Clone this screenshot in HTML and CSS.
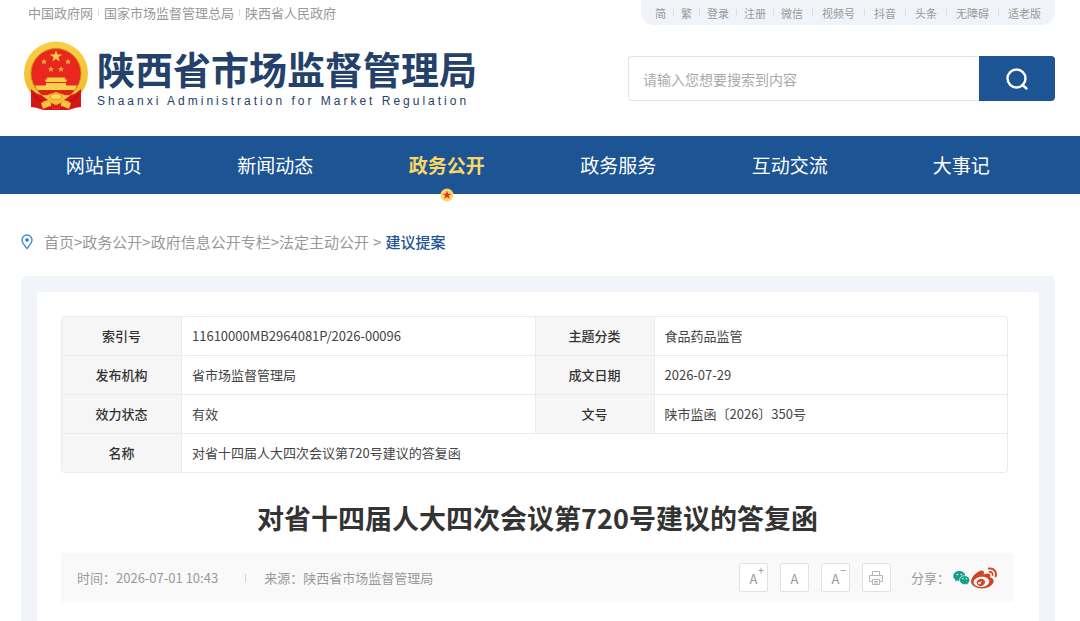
FILE: index.html
```html
<!DOCTYPE html>
<html lang="zh-CN">
<head>
<meta charset="utf-8">
<meta name="viewport" content="width=device-width, initial-scale=1">
<title>对省十四届人大四次会议第720号建议的答复函</title>
<link rel="stylesheet" href="styles.css">
</head>
<body>
<header class="header">
  <div class="topbar">
    <ul class="gov-links">
      <li><a href="#">中国政府网</a></li>
      <li><a href="#">国家市场监督管理总局</a></li>
      <li><a href="#">陕西省人民政府</a></li>
    </ul>
    <div class="tools">
      <ul class="tool-list">
        <li><a href="#">简</a></li>
        <li><a href="#">繁</a></li>
        <li><a href="#">登录</a></li>
        <li><a href="#">注册</a></li>
        <li><a href="#">微信</a></li>
      </ul>
      <ul class="tool-list tool-list-wide">
        <li><a href="#">视频号</a></li>
        <li><a href="#">抖音</a></li>
        <li><a href="#">头条</a></li>
        <li><a href="#">无障碍</a></li>
        <li><a href="#">适老版</a></li>
      </ul>
    </div>
  </div>
  <div class="masthead">
    <a class="brand" href="#">
      <svg class="emblem" viewBox="0 0 66 70" aria-hidden="true">
        <defs>
          <linearGradient id="gold" x1="0" y1="0" x2="0" y2="1">
            <stop offset="0" stop-color="#f8cf45"/>
            <stop offset="1" stop-color="#f0b92e"/>
          </linearGradient>
        </defs>
        <path d="M9 46L8 66q6 0 12 3h26q6-3 12-3l-1-20z" fill="#d3161c"/>
        <circle cx="33" cy="32.500" r="32" fill="url(#gold)"/>
        <circle cx="33" cy="32.500" r="25" fill="#e8281f" stroke="#c88a1c" stroke-width="1"/>
        <path d="M33 9l1.500 4.400h4.600l-3.700 2.800 1.400 4.400-3.800-2.700-3.800 2.700 1.400-4.400-3.700-2.800h4.600z" fill="#f7cb45"/>
        <g fill="#f0b83a">
          <path d="M21 17.500l.8 2.200h2.300l-1.800 1.400.7 2.300-2-1.400-2 1.400.7-2.300-1.800-1.400h2.300z"/>
          <path d="M45 17.500l.8 2.200h2.300l-1.800 1.400.7 2.300-2-1.400-2 1.400.7-2.300-1.800-1.400h2.300z"/>
          <path d="M28 25l.8 2.200h2.300l-1.800 1.400.7 2.300-2-1.400-2 1.400.7-2.300-1.800-1.400h2.300z"/>
          <path d="M38 25l.8 2.200h2.300l-1.800 1.400.7 2.300-2-1.400-2 1.400.7-2.300-1.800-1.400h2.300z"/>
        </g>
        <path d="M24 36.500h18v2h2l-1 2.500H23l-1-2.500h2zM23 42h20v2.500H23zM12 44.500h42l-2.500 4.500H14.500z" fill="#fad04a"/>
        <path d="M15 49.500h36q-4 6-9 8l-9-5-9 5q-5-2-9-8z" fill="#df221e"/>
        <path d="M17 54q7 1 10-1l6-2 6 2q3 2 10 1-2 5-10 5l-6 2-6-2q-8 0-10-5z" fill="#f5c238"/>
        <path d="M27 55q6-5 12 0l-2 4q-4-2-8 0z" fill="#fbd75c" stroke="#cf8b1a" stroke-width=".7"/>
        <path d="M8 48q5 5 10 6l7 5-6 2-1 7-10-3zM58 48q-5 5-10 6l-7 5 6 2 1 7 10-3z" fill="#d6181b"/>
        <path d="M10 52q3 7 9 8M56 52q-3 7-9 8" fill="none" stroke="#a80f14"/>
        <path d="M18 62l7-2 4 4 4-3 4 3 4-4 7 2-2 6-7-3-6 3-6-3-7 3z" fill="#f6c33b"/>
        <path d="M28 62l5 2 5-2v4l-5 2-5-2z" fill="#dc201d"/>
      </svg>
      <span class="brand-text">
        <span class="brand-name">陕西省市场监督管理局</span>
        <span class="brand-en">Shaanxi Administration for Market Regulation</span>
      </span>
    </a>
    <form class="search">
      <input class="search-input" type="text" aria-label="搜索" placeholder="请输入您想要搜索到内容">
      <button class="search-button" type="submit" aria-label="搜索">
        <svg width="24" height="24" viewBox="0 0 24 24" fill="none" stroke="#fff" stroke-width="2.400" stroke-linecap="round"><circle cx="11.500" cy="11.500" r="9"/><path d="M17.500 18l4 3.500"/></svg>
      </button>
    </form>
  </div>
</header>

<nav class="nav">
  <a class="nav-item" href="#">网站首页</a>
  <a class="nav-item" href="#">新闻动态</a>
  <a class="nav-item nav-item-active" href="#" aria-current="page">政务公开
    <svg class="nav-badge" viewBox="0 0 14 14" aria-hidden="true"><circle cx="7" cy="7" r="6.500" fill="#fbd666"/><path d="M7 2.500l1.100 3.200h3.300L8.800 7.700l1 3.300L7 9l-2.800 2 1-3.300-2.600-2h3.300z" fill="#ee2f24"/></svg>
  </a>
  <a class="nav-item" href="#">政务服务</a>
  <a class="nav-item" href="#">互动交流</a>
  <a class="nav-item" href="#">大事记</a>
</nav>

<div class="breadcrumb">
  <svg class="pin" viewBox="0 0 12 16" fill="none" aria-hidden="true"><path d="M6 14.500C3.500 11.500 1 8.800 1 6a5 5 0 0 1 10 0c0 2.800-2.500 5.500-5 8.500z" stroke="#3f8fd8" stroke-width="1.400"/><circle cx="6" cy="6" r="1.800" fill="#2b78c4"/></svg>
  <a href="#">首页</a><span>&gt;</span><a href="#">政务公开</a><span>&gt;</span><a href="#">政府信息公开专栏</a><span>&gt;</span><a href="#">法定主动公开</a><span class="arrow-last">&gt;</span><a class="current" href="#">建议提案</a>
</div>

<main class="panel">
  <article class="sheet">
    <table class="info">
      <colgroup><col class="col-label"><col><col class="col-label"><col></colgroup>
      <tbody>
        <tr><th scope="row">索引号</th><td>11610000MB2964081P/2026-00096</td><th scope="row">主题分类</th><td>食品药品监管</td></tr>
        <tr><th scope="row">发布机构</th><td>省市场监督管理局</td><th scope="row">成文日期</th><td>2026-07-29</td></tr>
        <tr><th scope="row">效力状态</th><td>有效</td><th scope="row">文号</th><td>陕市监函〔2026〕350号</td></tr>
        <tr><th scope="row">名称</th><td colspan="3">对省十四届人大四次会议第720号建议的答复函</td></tr>
      </tbody>
    </table>
    <h1 class="title">对省十四届人大四次会议第720号建议的答复函</h1>
    <div class="meta">
      <span class="meta-time">时间：2026-07-01 10:43</span>
      <span class="meta-source">来源：陕西省市场监督管理局</span>
      <div class="actions">
        <button class="action" type="button" aria-label="放大字号">A<span class="sign">+</span></button>
        <button class="action" type="button" aria-label="默认字号">A</button>
        <button class="action" type="button" aria-label="缩小字号">A<span class="sign">−</span></button>
        <button class="action action-print" type="button" aria-label="打印">
          <svg width="14" height="14" viewBox="0 0 14 14" fill="none" stroke="#b4b4b4"><path d="M3.500 4.500v-4h7v4M3.500 10.500h-2.500q-.5 0-.5-.5V5q0-.5.5-.5h12q.5 0 .5.500v5q0 .5-.5.5h-2.500M3.500 8.500h7v5h-7zM5 10.500h4M5 12h4M10.500 6.500h1"/></svg>
        </button>
      </div>
      <div class="share">
        <span class="share-label">分享：</span>
        <a href="#" aria-label="微信">
          <svg width="17" height="16" viewBox="0 0 17 16"><path d="M6.300 1C2.900 1 .3 3.200.3 6c0 1.600.8 2.900 2.200 3.800L2 11.500l2-1q1 .4 2.300.4C9.700 10.900 12.300 8.700 12.300 6S9.700 1 6.300 1z" fill="#12a086"/><path d="M11.600 5.700c-3 0-5.100 1.900-5.100 4.400s2.200 4.500 5.100 4.500q1 0 1.900-.3l1.700.9-.4-1.500c1.200-.8 2-2.100 2-3.600 0-2.500-2.300-4.400-5.200-4.400z" fill="#12a086" stroke="#f9f9f9" stroke-width=".7"/><g fill="#fff"><circle cx="4.300" cy="4.500" r=".8"/><circle cx="8.300" cy="4.500" r=".8"/><circle cx="10" cy="8.800" r=".7"/><circle cx="13.400" cy="8.800" r=".7"/></g></svg>
        </a>
        <a href="#" aria-label="微博">
          <svg width="26" height="22" viewBox="0 28 512 424"><path fill="#cf4527" d="M407 177.600c7.600-24-13.400-46.800-37.400-41.700-22 4.800-28.800-28.100-7.100-32.800 50.100-10.900 92.300 37.100 76.500 84.800-6.800 21.200-38.800 10.800-32-10.300zM214.800 446.700C108.500 446.700 0 395.300 0 310.400c0-44.300 28-95.400 76.300-143.700C176 67 279.500 65.800 249.900 161c-4 13.100 12.300 5.700 12.300 6 79.500-33.600 140.500-16.800 114 51.400-3.700 9.400 1.100 10.900 8.300 13.100 135.700 42.300 34.800 215.200-169.700 215.200zm143.700-146.300c-5.400-55.700-78.500-94-163.400-85.700-84.800 8.600-148.800 60.300-143.400 116s78.500 94 163.400 85.700c84.800-8.600 148.800-60.300 143.400-116zM347.900 35.100c-25.900 5.600-16.800 43.700 8.300 38.300 72.300-15.200 134.800 52.800 111.700 124-7.400 24.200 29.100 37 37.400 12 31.900-99.800-55.100-195.900-157.400-174.300zm-78.500 311c-17.100 38.800-66.800 60-109.100 46.300-40.800-13.100-58-53.400-40.300-89.700 17.700-35.400 63.100-55.400 103.400-45.100 42 10.800 63.100 50.200 46 88.500zm-86.300-30c-12.900-5.400-30 .3-38 12.900-8.300 12.900-4.300 28 8.600 34 13.100 6 30.800.3 39.100-12.900 8-13.100 3.700-28.300-9.700-34zm32.600-13.400c-5.100-1.700-11.400.6-14.300 5.400-2.900 5.100-1.400 10.600 3.700 12.900 5.100 2 11.700-.3 14.600-5.400 2.800-5.200 1.100-10.900-4-12.900z"/></svg>
        </a>
      </div>
    </div>
  </article>
</main>
</body>
</html>
```
FILE: styles.css
```css
* {
  box-sizing: border-box;
}

body {
  display: flex;
  flex-direction: column;
  min-height: 100vh;
  margin: 0;
  background: #fff;
  color: #444;
  font-family: "Noto Sans CJK SC", "Noto Sans", sans-serif;
  font-size: 13px;
  line-height: 20px;
}

a {
  color: inherit;
  text-decoration: none;
}

ul {
  display: flex;
  margin: 0;
  padding: 0;
  list-style: none;
}

button,
input {
  font: inherit;
}

svg {
  display: block;
}

.header {
  padding: 0 25px 0 23px;
}

.topbar {
  display: flex;
  align-items: center;
  justify-content: space-between;
  height: 25px;
}

.gov-links {
  color: #999;
}

.gov-links li,
.tool-list li {
  display: flex;
  align-items: center;
  padding: 0 5px;
}

.gov-links li + li::before,
.tool-list li + li::before,
.tool-list-wide li::before {
  content: "";
  width: 1px;
  height: 7px;
  margin-left: -5px;
  margin-right: 5px;
  background: #ddd;
}

.tools {
  display: flex;
  align-items: center;
  height: 25px;
  padding: 0 7px;
  border-radius: 0 0 13px 13px;
  background: #f0f3f7;
  color: #999;
  font-size: 11px;
}

.tool-list li {
  padding: 0 7px;
}

.tool-list li + li::before {
  margin-left: -7px;
  margin-right: 7px;
}

.tool-list-wide li,
.tool-list-wide li + li {
  padding: 0 9px;
}

.tool-list-wide li::before,
.tool-list-wide li + li::before {
  margin-left: -9px;
  margin-right: 9px;
}

.tool-list-wide li:first-child {
  padding-left: 11px;
}

.tool-list-wide li:last-child {
  padding-right: 7px;
}

.masthead {
  display: flex;
  align-items: center;
  justify-content: space-between;
  gap: 24px;
  height: 111px;
  padding-bottom: 4px;
}

.brand {
  display: flex;
  align-items: center;
  gap: 8px;
  margin-bottom: 6px;
  color: #24416a;
}

.emblem {
  width: 66px;
  height: 70px;
}

.brand-text {
  display: flex;
  flex-direction: column;
  white-space: nowrap;
}

.brand-name {
  font-size: 38px;
  font-weight: 700;
  line-height: 50px;
}

.brand-en {
  font-family: "Liberation Sans", sans-serif;
  font-size: 12px;
  line-height: 16px;
  letter-spacing: 3px;
}

.search {
  display: flex;
  width: 427px;
  height: 45px;
}

.search-input {
  flex: 1;
  min-width: 0;
  padding: 0 14px;
  border: 1px solid #dfe6ee;
  border-right: 0;
  border-radius: 4px 0 0 4px;
  background: #fff;
  color: #444;
  font-size: 14px;
}

.search-input::placeholder {
  color: #aaa;
}

.search-button {
  display: grid;
  place-items: center;
  width: 76px;
  padding: 0;
  border: 0;
  border-radius: 0 4px 4px 0;
  background: #1c5494;
}

.nav {
  display: flex;
  height: 58px;
  padding: 0 33px 0 18px;
  background: #1c5494;
  color: #fff;
  font-size: 19px;
}

.nav-item {
  position: relative;
  display: flex;
  flex: 1;
  align-items: center;
  justify-content: center;
}

.nav-item-active {
  color: #fbd666;
  font-weight: 700;
}

.nav-badge {
  position: absolute;
  bottom: -8px;
  left: 50%;
  width: 14px;
  height: 14px;
  margin-left: -7px;
}

.breadcrumb {
  display: flex;
  align-items: center;
  padding: 38px 25px 24px 21px;
  color: #999;
  font-size: 15px;
}

.pin {
  width: 12px;
  height: 16px;
  margin-right: 11px;
}

.arrow-last {
  padding: 0 4px;
}

.current {
  color: #1c5494;
  font-weight: 500;
}

.panel {
  display: flex;
  flex: 1;
  flex-direction: column;
  margin: 0 25px 0 21px;
  padding: 16px 16px 0;
  border-radius: 5px 5px 0 0;
  background: #f1f5f9;
}

.sheet {
  flex: 1;
  padding: 24px 25px 19px 24px;
  background: #fff;
}

.info {
  width: calc(100% - 6px);
  border: 1px solid #ebebeb;
  border-radius: 4px;
  border-spacing: 0;
  table-layout: fixed;
  overflow: hidden;
}

.col-label {
  width: 120px;
}

.info th,
.info td {
  height: 39px;
  padding: 0 10px;
  border-bottom: 1px solid #ebebeb;
}

.info th {
  border-right: 1px solid #ebebeb;
  background: #f6f6f6;
  color: #333;
  font-weight: 500;
  text-align: center;
}

.info td + th {
  border-left: 1px solid #ebebeb;
}

.info tr:last-child > * {
  height: 38px;
  border-bottom: 0;
}

.title {
  margin: 25px 0 15px;
  color: #333;
  font-size: 27px;
  font-weight: 700;
  line-height: 40px;
  text-align: center;
}

.meta {
  display: flex;
  align-items: center;
  height: 49px;
  padding: 0 17px 0 16px;
  background: #f9f9f9;
  color: #999;
}

.meta-source {
  display: flex;
  align-items: center;
  margin-left: 27px;
}

.meta-source::before {
  content: "";
  width: 1px;
  height: 8px;
  margin-right: 18px;
  background: #d5d5d5;
}

.actions {
  display: flex;
  gap: 12px;
  margin-left: auto;
}

.action {
  position: relative;
  display: grid;
  place-items: center;
  width: 29px;
  height: 29px;
  padding: 2px 0 0;
  border: 1px solid #e2e2e2;
  border-radius: 2px;
  background: #fff;
  color: #999;
}

.action-print {
  padding-top: 0;
}

.sign {
  position: absolute;
  top: 0;
  right: 3px;
  font-size: 11px;
  line-height: 12px;
}

.share {
  display: flex;
  align-items: center;
  gap: 1px;
  margin-left: 20px;
}

.share-label {
  margin-right: 2px;
}
```
